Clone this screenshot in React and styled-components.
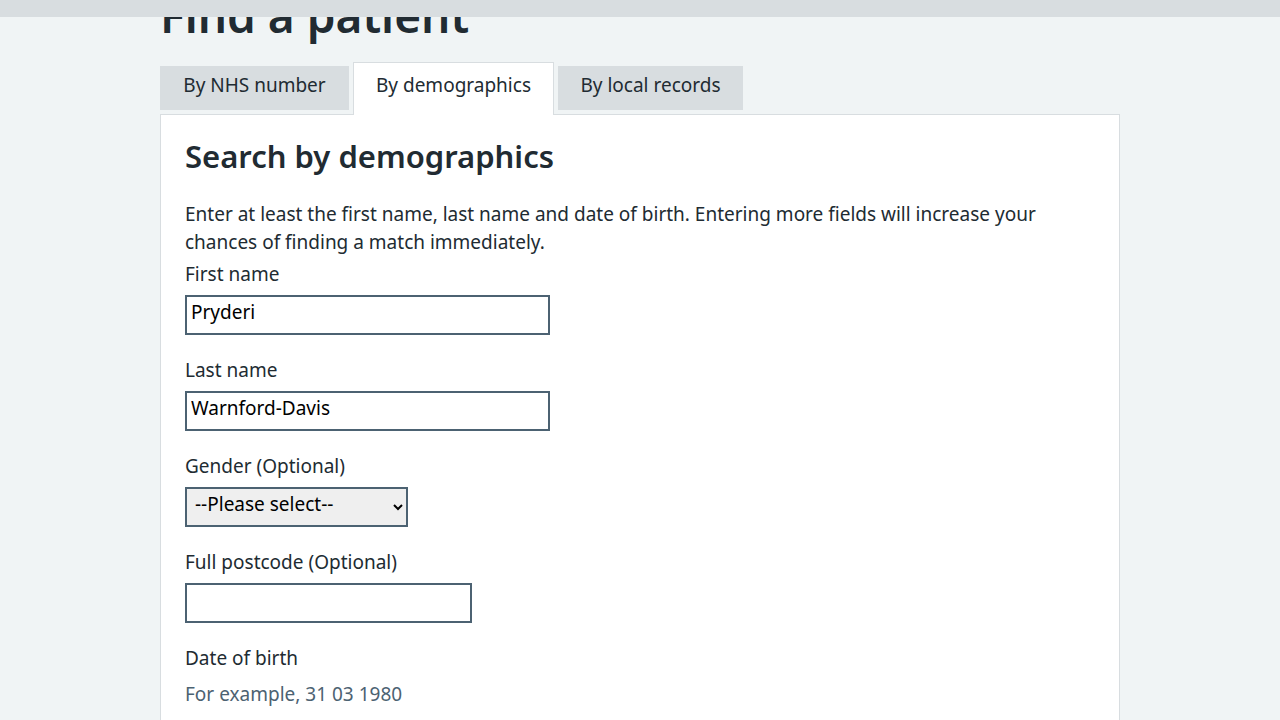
import React from "react";
import styled, { createGlobalStyle } from "styled-components";

const GlobalStyle = createGlobalStyle`
  *, *::before, *::after { box-sizing: border-box; }
  body {
    margin: 0;
    background: #f0f4f5;
    color: #212b32;
    font-family: "Noto Sans", "Open Sans", Arial, sans-serif;
    font-size: 19px;
    line-height: 28px;
  }
`;

const Page = styled.div`
  display: flex;
  flex-direction: column;
  min-height: 100vh;
`;

const TopBar = styled.header`
  position: sticky;
  top: 0;
  z-index: 1;
  height: 17px;
  flex: none;
  background: #d8dde0;
`;

const Main = styled.main`
  display: flex;
  flex: 1;
  flex-direction: column;
  width: 100%;
  max-width: 960px;
  margin: -30px auto 0;
`;

const Title = styled.h1`
  margin: 0 0 19px;
  font-size: 46px;
  line-height: 56px;
  font-weight: 600;
`;

const TabList = styled.div`
  display: flex;
  align-items: flex-start;
  gap: 4px;
  margin-bottom: -1px;
`;

const Tab = styled.button`
  flex: none;
  width: ${({ $width }) => $width}px;
  margin: ${({ $active }) => ($active ? "0" : "4px 0")};
  padding: ${({ $active }) => ($active ? "8px 0 16px" : "5px 0 11px")};
  border: ${({ $active }) => ($active ? "1px solid #d8dde0" : "0")};
  border-bottom: 0;
  background: ${({ $active }) => ($active ? "#fff" : "#d8dde0")};
  color: inherit;
  font: inherit;
  text-align: center;
  white-space: nowrap;
  cursor: pointer;
  position: relative;
`;

const Panel = styled.section`
  flex: 1;
  padding: 21px 24px 8px;
  border: 1px solid #d8dde0;
  border-bottom: 0;
  background: #fff;
`;

const PanelTitle = styled.h2`
  margin: 0 0 24px;
  font-size: 31px;
  line-height: 40px;
  font-weight: 600;
`;

const Intro = styled.p`
  margin: 0 0 4px;
`;

const Field = styled.div`
  display: flex;
  flex-direction: column;
  align-items: flex-start;
  gap: 7px;
  margin-bottom: 21px;
`;

const Input = styled.input`
  width: 100%;
  max-width: ${({ $width }) => $width}px;
  height: 40px;
  padding: 0 4px 6px;
  border: 2px solid #4c6272;
  border-radius: 0;
  background: #fff;
  color: #000;
  font: inherit;
`;

const Select = styled.select`
  width: 223px;
  height: 40px;
  padding: 0 4px 6px;
  border: 2px solid #4c6272;
  border-radius: 0;
  background: #efefef;
  color: #000;
  font: inherit;
`;

const DateGroup = styled.fieldset`
  margin: 0;
  padding: 0;
  border: 0;
`;

const Legend = styled.legend`
  margin-bottom: 8px;
  padding: 0;
`;

const Hint = styled.div`
  color: #4c6272;
`;

const tabs = [
  { label: "By NHS number", width: 189 },
  { label: "By demographics", width: 201, active: true },
  { label: "By local records", width: 185 },
];

function TextField({ id, label, value, width }) {
  return (
    <Field>
      <label htmlFor={id}>{label}</label>
      <Input id={id} type="text" defaultValue={value} $width={width} />
    </Field>
  );
}

export default function App() {
  return (
    <>
      <GlobalStyle />
      <Page>
        <TopBar />
        <Main>
          <Title>Find a patient</Title>
          <TabList role="tablist">
            {tabs.map((tab) => (
              <Tab
                key={tab.label}
                type="button"
                role="tab"
                aria-selected={Boolean(tab.active)}
                $active={tab.active}
                $width={tab.width}
              >
                {tab.label}
              </Tab>
            ))}
          </TabList>
          <Panel role="tabpanel">
            <PanelTitle>Search by demographics</PanelTitle>
            <Intro>
              Enter at least the first name, last name and date of birth. Entering more fields
              will increase your chances of finding a match immediately.
            </Intro>
            <TextField id="first-name" label="First name" value="Pryderi" width={365} />
            <TextField id="last-name" label="Last name" value="Warnford-Davis" width={365} />
            <Field>
              <label htmlFor="gender">Gender (Optional)</label>
              <Select id="gender">
                <option>--Please select--</option>
              </Select>
            </Field>
            <TextField id="postcode" label="Full postcode (Optional)" value="" width={287} />
            <DateGroup>
              <Legend>Date of birth</Legend>
              <Hint>For example, 31 03 1980</Hint>
            </DateGroup>
          </Panel>
        </Main>
      </Page>
    </>
  );
}
